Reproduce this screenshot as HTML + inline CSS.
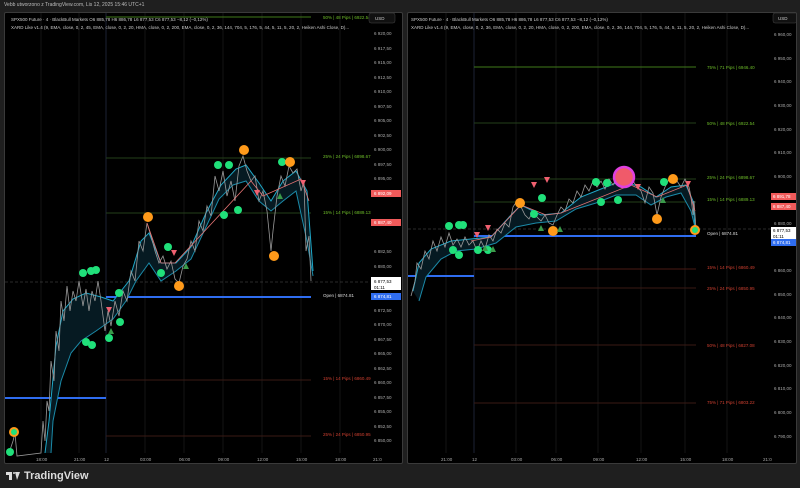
<!DOCTYPE html>
<html><head><meta charset="utf-8"><style>
*{margin:0;padding:0;box-sizing:border-box}
body{width:800px;height:488px;background:#1f1f1f;font-family:"Liberation Sans",sans-serif;overflow:hidden;position:relative;color:#ccc}
.top{position:absolute;left:4px;top:2px;font-size:5px;color:#bbb}
.panel{position:absolute;top:12px;height:452px;background:#000;border:1px solid #3a3a3a;border-radius:2px;overflow:hidden}
svg text{font-family:"Liberation Sans",sans-serif}
.logo{position:absolute;left:6px;top:470px;font-size:11px;font-weight:bold;color:#ddd;display:flex;align-items:center;gap:4px}
</style></head><body>
<div class="top">Vebb utworzono z TradingView.com, Lis 12, 2025 15:46 UTC+1</div>

<div class="panel" style="left:4px;width:399px">
<svg width="399" height="452" viewBox="4 12 399 452">
<g stroke="#151515" stroke-width="1">
<line x1="40" y1="12" x2="40" y2="452"/><line x1="78" y1="12" x2="78" y2="452"/><line x1="144" y1="12" x2="144" y2="452"/><line x1="183" y1="12" x2="183" y2="452"/><line x1="222" y1="12" x2="222" y2="452"/><line x1="261" y1="12" x2="261" y2="452"/><line x1="300" y1="12" x2="300" y2="452"/><line x1="339" y1="12" x2="339" y2="452"/>
</g>
<line x1="105" y1="12" x2="105" y2="452" stroke="#1c2233"/>
<line x1="105" y1="16" x2="310" y2="16" stroke="#3f7a1a" stroke-width="1"/>
<line x1="105" y1="157" x2="310" y2="157" stroke="#24401a"/>
<line x1="105" y1="212" x2="310" y2="212" stroke="#24401a"/>
<line x1="105" y1="379" x2="310" y2="379" stroke="#3a1a14"/>
<line x1="105" y1="435" x2="310" y2="435" stroke="#3a1a14"/>
<line x1="4" y1="281" x2="368" y2="281" stroke="#555" stroke-dasharray="3,2" stroke-width=".6"/>
<line x1="105" y1="296" x2="310" y2="296" stroke="#2f6df0" stroke-width="2"/>
<line x1="4" y1="397" x2="105" y2="397" stroke="#2f6df0" stroke-width="2"/>
<polygon fill="#061a22" points="44,452 48,420 55,345 62,310 72,298 85,292 100,296 112,300 128,280 140,240 148,232 160,262 175,262 190,246 205,212 220,184 235,168 245,164 258,182 270,200 282,180 295,170 306,190 312,270 306,240 295,190 282,200 270,210 258,200 245,180 232,184 218,198 205,226 190,258 175,270 160,280 148,262 135,280 125,300 112,318 95,330 80,340 70,352 60,380 52,420 50,452"/>
<polyline fill="none" stroke="#1fa8c8" stroke-width="1" points="44,452 48,420 55,345 62,310 72,298 85,292 100,296 112,300 128,280 140,240 148,232 160,262 175,262 190,246 205,212 220,184 235,168 245,164 258,182 270,200 282,180 295,170 306,190 312,270"/>
<polyline fill="none" stroke="#1b8aa8" stroke-width="1" points="50,452 52,420 60,380 70,352 80,340 95,330 112,318 125,300 135,280 148,262 160,280 175,270 190,258 205,226 218,198 232,184 245,180 258,200 270,210 282,200 295,190 306,240 312,275"/>
<polyline fill="none" stroke="#9a9a9a" stroke-width=".8" points="8,452 12,440 14,432 16,455 40,452 42,420 44,440 46,400 48,410 50,360 53,380 55,330 58,350 60,300 63,320 66,285 69,310 72,290 75,300 78,280 82,305 85,288 88,310 91,290 94,300 97,280 100,300 104,330 107,310 110,325 114,300 118,315 122,290 126,300 130,270 134,280 138,240 142,250 146,222 150,235 154,250 158,262 162,255 166,268 170,260 174,278 178,282 182,265 186,258 190,240 194,250 198,220 202,230 206,205 210,215 214,175 218,190 222,170 226,195 230,180 234,200 238,165 242,155 246,170 250,180 254,175 258,200 262,190 266,210 270,250 272,230 276,195 280,175 284,185 288,165 292,172 296,168 300,190 303,180 305,250 308,235 310,280"/>
<polyline fill="none" stroke="#e57373" stroke-width=".8" points="146,222 160,262 174,262 250,180 262,195 300,178 308,200"/>
<g fill="#20e07a">
<circle cx="9" cy="451" r="4"/><circle cx="82" cy="272" r="4"/><circle cx="90" cy="270" r="4"/><circle cx="95" cy="269" r="4"/><circle cx="85" cy="341" r="4"/><circle cx="91" cy="344" r="4"/><circle cx="108" cy="337" r="4"/><circle cx="118" cy="292" r="4"/><circle cx="119" cy="321" r="4"/><circle cx="167" cy="246" r="4"/><circle cx="160" cy="272" r="4"/><circle cx="217" cy="164" r="4"/><circle cx="228" cy="164" r="4"/><circle cx="223" cy="214" r="4"/><circle cx="237" cy="209" r="4"/><circle cx="281" cy="161" r="4"/>
</g>
<g fill="#ff9a1a"><circle cx="13" cy="431" r="5"/><circle cx="147" cy="216" r="5"/><circle cx="178" cy="285" r="5"/><circle cx="243" cy="149" r="5"/><circle cx="273" cy="255" r="5"/><circle cx="289" cy="161" r="5"/></g>
<circle cx="13" cy="431" r="3" fill="#20e07a"/>
<g fill="#f06070"><polygon points="105,306 111,306 108,312"/><polygon points="170,249 176,249 173,255"/><polygon points="253,189 259,189 256,195"/><polygon points="299,179 305,179 302,185"/></g>
<g fill="#3a9a4a"><polygon points="107,333 113,333 110,327"/><polygon points="182,268 188,268 185,262"/><polygon points="276,198 282,198 279,192"/></g>
<g font-size="4.5">
<text x="322" y="18" fill="#6fbf2a">50% | 48 Pips | 6922.54</text>
<text x="322" y="157" fill="#6fbf2a">25% | 24 Pips | 6898.67</text>
<text x="322" y="213" fill="#6fbf2a">15% | 14 Pips | 6889.13</text>
<text x="322" y="379" fill="#d04030">15% | 14 Pips | 6860.49</text>
<text x="322" y="435" fill="#d04030">25% | 24 Pips | 6850.95</text>
<text x="322" y="296" fill="#ddd">Open | 6874.81</text>
</g>
<g font-size="4.5" fill="#aaa">
<text x="10" y="20" fill="#ccc">SPX500 Future · 4 · BlackBull Markets  O6 885,78  H6 886,78  L6 877,53  C6 877,53  −8,12 (−0,12%)</text>
<text x="10" y="28" fill="#ccc">XARD Like v1.4 (9, EMA, close, 0, 2, 45, EMA, close, 0, 2, 20, HMA, close, 0, 2, 200, EMA, close, 0, 2, 36, 144, 704, 5, 176, 5, 44, 5, 11, 5, 20, 2, Heiken Ashi Close, D)...</text>
<text x="373" y="34">6 920,00</text><text x="373" y="49">6 917,50</text><text x="373" y="63">6 915,00</text><text x="373" y="78">6 912,50</text><text x="373" y="92">6 910,00</text><text x="373" y="107">6 907,50</text><text x="373" y="121">6 905,00</text><text x="373" y="136">6 902,50</text><text x="373" y="150">6 900,00</text><text x="373" y="165">6 897,50</text><text x="373" y="179">6 895,00</text><text x="373" y="252">6 882,50</text><text x="373" y="267">6 880,00</text><text x="373" y="311">6 872,50</text><text x="373" y="325">6 870,00</text><text x="373" y="340">6 867,50</text><text x="373" y="354">6 865,00</text><text x="373" y="369">6 862,50</text><text x="373" y="383">6 860,00</text><text x="373" y="398">6 857,50</text><text x="373" y="412">6 855,00</text><text x="373" y="427">6 852,50</text><text x="373" y="441">6 850,00</text>
</g>
<rect x="368" y="12" width="26" height="10" rx="2" fill="#111" stroke="#444" stroke-width=".5"/><text x="374" y="19" font-size="4.5" fill="#ccc">USD</text>
<rect x="370" y="189" width="30" height="7" fill="#f05a5a"/><text x="373" y="194" font-size="4.5" fill="#fff">6 892,09</text>
<rect x="370" y="218" width="30" height="7" fill="#f05a5a"/><text x="373" y="223" font-size="4.5" fill="#fff">6 887,40</text>
<rect x="370" y="276" width="30" height="13" fill="#fff"/><text x="373" y="282" font-size="4.5" fill="#000">6 877,53</text><text x="373" y="288" font-size="4.5" fill="#000">01:11</text>
<rect x="370" y="292" width="30" height="7" fill="#2f6df0"/><text x="373" y="297" font-size="4.5" fill="#fff">6 874,81</text>
<g font-size="4.5" fill="#aaa"><text x="35" y="460">18:00</text><text x="73" y="460">21:00</text><text x="103" y="460">12</text><text x="139" y="460">03:00</text><text x="178" y="460">06:00</text><text x="217" y="460">09:00</text><text x="256" y="460">12:00</text><text x="295" y="460">15:00</text><text x="334" y="460">18:00</text><text x="372" y="460">21:0</text></g>
</svg></div>

<div class="panel" style="left:407px;width:390px">
<svg width="390" height="452" viewBox="407 12 390 452">
<g stroke="#151515"><line x1="445" y1="12" x2="445" y2="452"/><line x1="515" y1="12" x2="515" y2="452"/><line x1="555" y1="12" x2="555" y2="452"/><line x1="597" y1="12" x2="597" y2="452"/><line x1="640" y1="12" x2="640" y2="452"/><line x1="684" y1="12" x2="684" y2="452"/><line x1="726" y1="12" x2="726" y2="452"/></g>
<line x1="473" y1="12" x2="473" y2="452" stroke="#1c2233"/>
<line x1="473" y1="11" x2="695" y2="11" stroke="#3f7a1a" stroke-width="2"/>
<line x1="473" y1="66" x2="695" y2="66" stroke="#3f7a1a"/>
<line x1="473" y1="122" x2="695" y2="122" stroke="#24401a"/>
<line x1="473" y1="178" x2="695" y2="178" stroke="#24401a"/>
<line x1="473" y1="201" x2="695" y2="201" stroke="#24401a"/>
<line x1="473" y1="268" x2="695" y2="268" stroke="#4a1a14"/>
<line x1="473" y1="287" x2="695" y2="287" stroke="#3a1a14"/>
<line x1="473" y1="344" x2="695" y2="344" stroke="#3a1a14"/>
<line x1="473" y1="402" x2="695" y2="402" stroke="#3a1a14"/>
<line x1="407" y1="228" x2="770" y2="228" stroke="#555" stroke-dasharray="3,2" stroke-width=".6"/>
<line x1="473" y1="235" x2="695" y2="235" stroke="#2f6df0" stroke-width="2"/>
<line x1="407" y1="275" x2="473" y2="275" stroke="#2f6df0" stroke-width="2"/>
<polygon fill="#061a22" points="412,290 418,262 430,248 450,240 470,238 490,236 510,214 520,204 540,214 560,212 580,196 600,188 620,180 640,186 655,196 670,186 685,184 692,200 694,226 690,210 680,192 665,196 650,204 635,194 615,194 595,202 575,208 555,220 535,222 515,226 495,242 475,248 455,250 440,258 425,276 418,300"/>
<polyline fill="none" stroke="#1fa8c8" points="412,290 418,262 430,248 450,240 470,238 490,236 510,214 520,204 540,214 560,212 580,196 600,188 620,180 640,186 655,196 670,186 685,184 692,200 694,226"/>
<polyline fill="none" stroke="#1b8aa8" points="418,300 425,276 440,258 455,250 475,248 495,242 515,226 535,222 555,220 575,208 595,202 615,194 635,194 650,204 665,196 680,192 690,210 694,226"/>
<polyline fill="none" stroke="#9a9a9a" stroke-width=".8" points="410,295 414,280 416,262 420,268 424,250 428,258 432,240 436,250 440,236 444,246 448,232 452,244 456,238 460,246 464,236 468,244 472,240 476,250 480,240 484,248 488,234 492,240 496,228 500,232 504,222 508,226 512,206 516,200 520,206 524,214 528,218 532,210 536,216 540,220 544,214 548,222 552,224 556,214 560,206 564,210 568,198 572,202 576,190 580,196 584,184 588,190 592,180 596,186 600,180 604,188 608,178 612,184 616,176 620,182 624,170 628,178 632,180 636,186 640,190 644,202 648,186 652,192 656,214 660,196 664,186 668,178 672,182 676,180 680,186 684,178 688,186 690,196 692,214 693,200 695,228"/>
<polyline fill="none" stroke="#e57373" stroke-width=".8" points="470,240 490,236 520,204 545,214 560,212 630,184 656,196 686,184 694,210"/>
<g fill="#20e07a"><circle cx="448" cy="225" r="4"/><circle cx="458" cy="224" r="4"/><circle cx="462" cy="224" r="4"/><circle cx="452" cy="249" r="4"/><circle cx="458" cy="254" r="4"/><circle cx="477" cy="249" r="4"/><circle cx="487" cy="249" r="4"/><circle cx="533" cy="213" r="4"/><circle cx="541" cy="197" r="4"/><circle cx="595" cy="181" r="4"/><circle cx="606" cy="182" r="4"/><circle cx="600" cy="201" r="4"/><circle cx="617" cy="199" r="4"/><circle cx="663" cy="181" r="4"/></g>
<g fill="#ff9a1a"><circle cx="519" cy="202" r="5"/><circle cx="552" cy="230" r="5"/><circle cx="672" cy="178" r="5"/><circle cx="656" cy="218" r="5"/><circle cx="694" cy="229" r="5"/></g>
<circle cx="694" cy="229" r="3" fill="#20e07a"/>
<circle cx="623" cy="176" r="10" fill="#f05a6a" stroke="#e040e0" stroke-width="2.5"/>
<g fill="#f06070"><polygon points="484,224 490,224 487,230"/><polygon points="473,231 479,231 476,237"/><polygon points="530,181 536,181 533,187"/><polygon points="543,176 549,176 546,182"/><polygon points="634,183 640,183 637,189"/><polygon points="684,180 690,180 687,186"/></g>
<g fill="#3a9a4a"><polygon points="481,250 487,250 484,244"/><polygon points="489,251 495,251 492,245"/><polygon points="537,230 543,230 540,224"/><polygon points="556,231 562,231 559,225"/><polygon points="659,202 665,202 662,196"/></g>
<g font-size="4.5">
<text x="706" y="68" fill="#6fbf2a">75% | 71 Pips | 6946.40</text>
<text x="706" y="124" fill="#6fbf2a">50% | 48 Pips | 6922.54</text>
<text x="706" y="178" fill="#6fbf2a">25% | 24 Pips | 6898.67</text>
<text x="706" y="200" fill="#6fbf2a">15% | 14 Pips | 6889.13</text>
<text x="706" y="234" fill="#ddd">Open | 6874.81</text>
<text x="706" y="268" fill="#d04030">15% | 14 Pips | 6860.49</text>
<text x="706" y="289" fill="#d04030">25% | 24 Pips | 6850.95</text>
<text x="706" y="346" fill="#d04030">50% | 48 Pips | 6827.08</text>
<text x="706" y="403" fill="#d04030">75% | 71 Pips | 6803.22</text>
</g>
<g font-size="4.5" fill="#aaa">
<text x="410" y="20" fill="#ccc">SPX500 Future · 4 · BlackBull Markets  O6 885,78  H6 886,78  L6 877,53  C6 877,53  −8,12 (−0,12%)</text>
<text x="410" y="28" fill="#ccc">XARD Like v1.4 (9, EMA, close, 0, 2, 36, EMA, close, 0, 2, 20, HMA, close, 0, 2, 200, EMA, close, 0, 2, 36, 144, 704, 5, 176, 5, 44, 5, 11, 5, 20, 2, Heiken Ashi Close, D)...</text>
<text x="773" y="35">6 960,00</text><text x="773" y="59">6 950,00</text><text x="773" y="82">6 940,00</text><text x="773" y="106">6 930,00</text><text x="773" y="130">6 920,00</text><text x="773" y="153">6 910,00</text><text x="773" y="177">6 900,00</text><text x="773" y="224">6 880,00</text><text x="773" y="271">6 860,00</text><text x="773" y="295">6 850,00</text><text x="773" y="318">6 840,00</text><text x="773" y="342">6 830,00</text><text x="773" y="366">6 820,00</text><text x="773" y="389">6 810,00</text><text x="773" y="413">6 800,00</text><text x="773" y="437">6 790,00</text>
</g>
<rect x="772" y="12" width="24" height="10" rx="2" fill="#111" stroke="#444" stroke-width=".5"/><text x="777" y="19" font-size="4.5" fill="#ccc">USD</text>
<rect x="770" y="192" width="27" height="7" fill="#f05a5a"/><text x="772" y="197" font-size="4.5" fill="#fff">6 891,78</text>
<rect x="770" y="202" width="27" height="7" fill="#f05a5a"/><text x="772" y="207" font-size="4.5" fill="#fff">6 887,40</text>
<rect x="770" y="226" width="27" height="12" fill="#fff"/><text x="772" y="231" font-size="4.5" fill="#000">6 877,53</text><text x="772" y="237" font-size="4.5" fill="#000">01:11</text>
<rect x="770" y="238" width="27" height="7" fill="#2f6df0"/><text x="772" y="243" font-size="4.5" fill="#fff">6 874,81</text>
<g font-size="4.5" fill="#aaa"><text x="440" y="460">21:00</text><text x="471" y="460">12</text><text x="510" y="460">03:00</text><text x="550" y="460">06:00</text><text x="592" y="460">09:00</text><text x="635" y="460">12:00</text><text x="679" y="460">15:00</text><text x="721" y="460">18:00</text><text x="762" y="460">21:0</text></g>
</svg></div>

<div class="logo"><span style="display:inline-block;width:14px;height:8px;position:relative"><span style="position:absolute;left:0;top:0;width:6px;height:3px;background:#ddd"></span><span style="position:absolute;left:3px;top:0;width:3px;height:8px;background:#ddd"></span><span style="position:absolute;left:7px;top:0;width:2px;height:2px;border-radius:1px;background:#ddd"></span><span style="position:absolute;left:9px;top:0;width:0;height:0;border-left:2px solid transparent;border-right:3px solid transparent;border-top:8px solid #ddd"></span></span>TradingView</div>
</body></html>
